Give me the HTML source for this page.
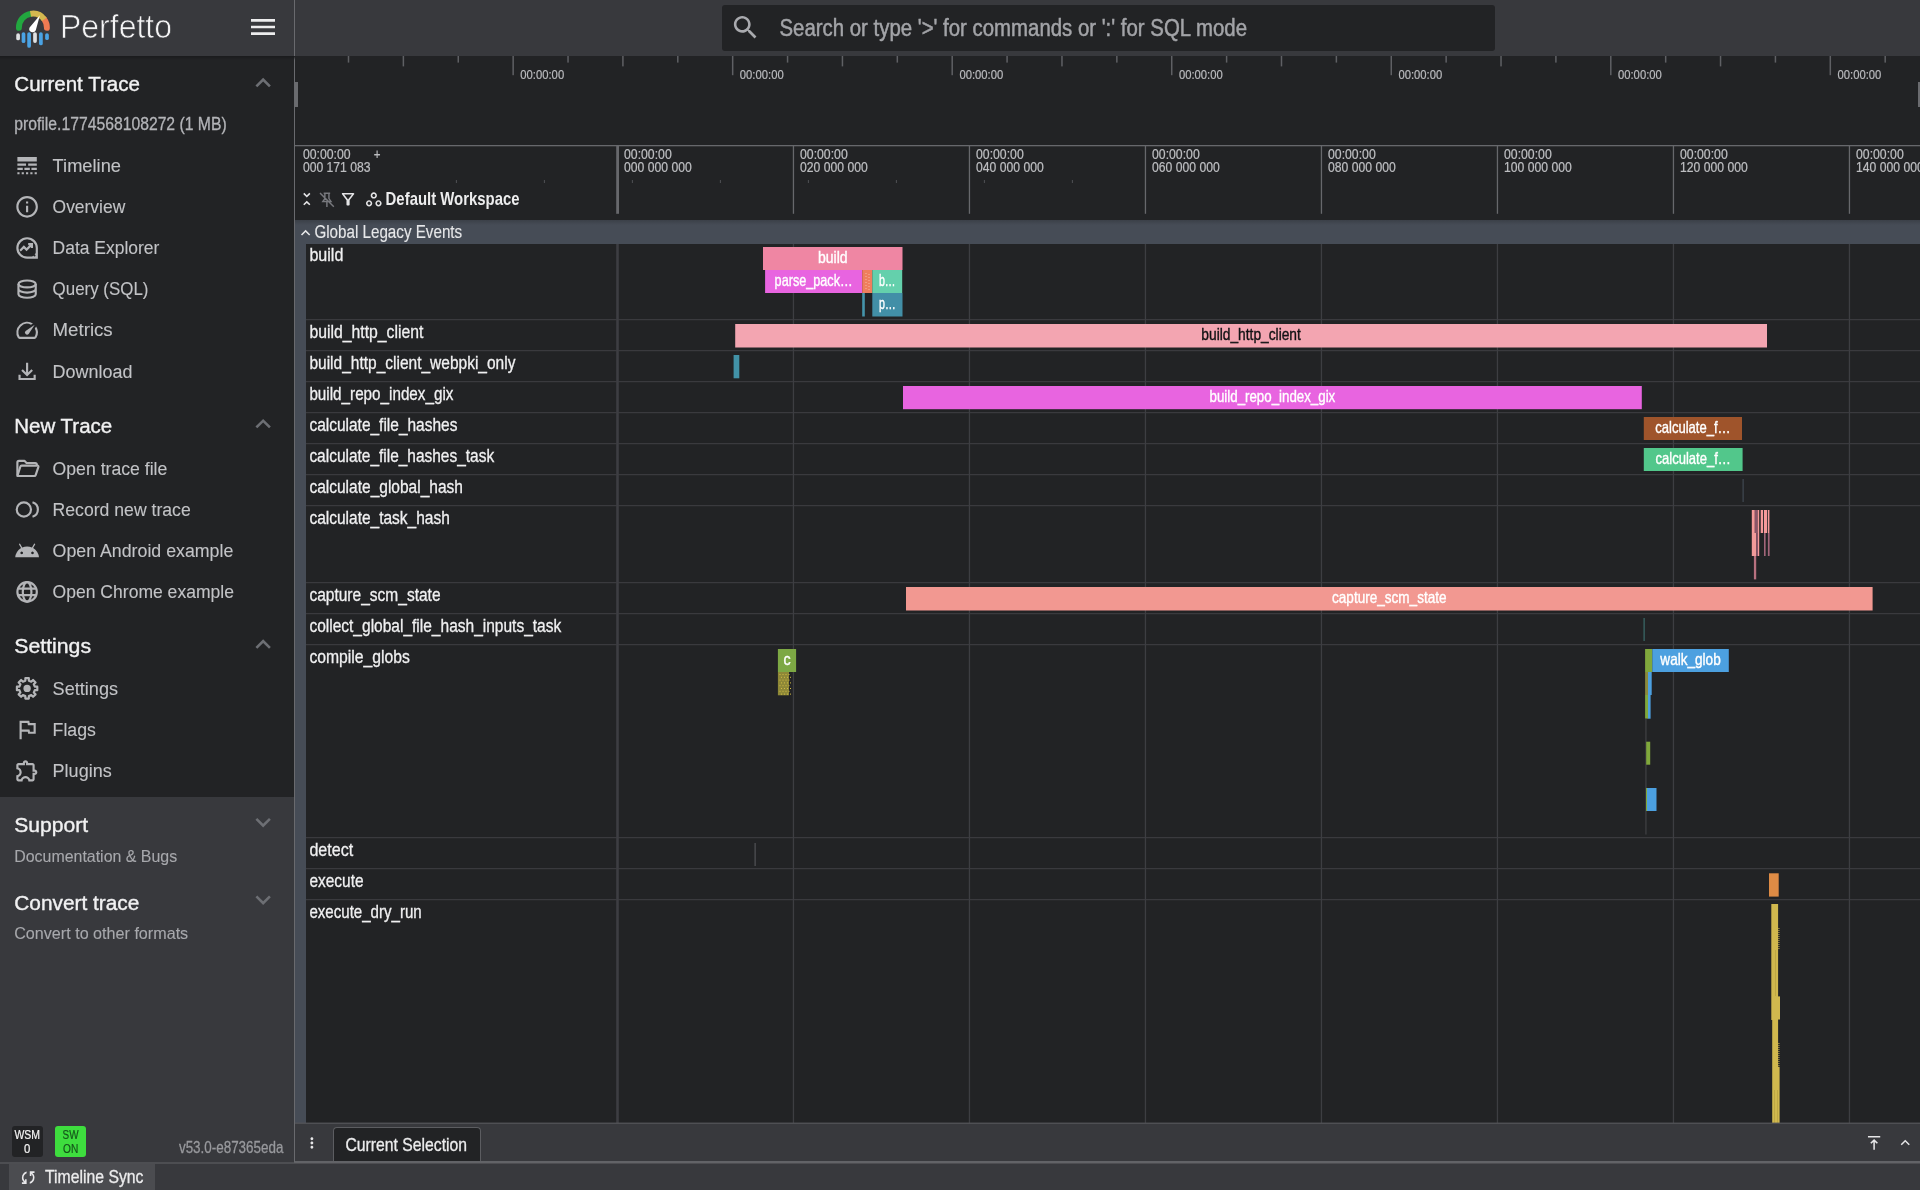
<!DOCTYPE html>
<html lang="en"><head><meta charset="utf-8"><title>Perfetto UI</title>
<style>
html,body{margin:0;padding:0;background:#222325;}
body{width:1920px;height:1190px;position:relative;overflow:hidden;font-family:"Liberation Sans",sans-serif;}
#app div{position:absolute;}
#ov{position:absolute;left:0;top:0;will-change:transform;}
#ov text{font-family:"Liberation Sans",sans-serif;white-space:pre;}
</style></head><body>
<div id="app">
<div style="left:0px;top:0px;width:1920px;height:56px;background:#38393d;"></div>
<div style="left:0px;top:56px;width:294px;height:741px;background:#222325;"></div>
<div style="left:0px;top:797px;width:294px;height:366px;background:#38393d;"></div>
<div style="left:294px;top:0px;width:1px;height:1163px;background:#696a6e;"></div>
<div style="left:722px;top:5px;width:773px;height:46px;background:#222325;border-radius:3px;"></div>
<div style="left:0;top:56px;width:1920px;height:4px;background:linear-gradient(#1a1b1d,rgba(34,35,38,0));"></div>
<div style="left:12px;top:1126px;width:31px;height:31px;background:#222325;border-radius:3px;"></div>
<div style="left:55px;top:1126px;width:31px;height:31px;background:#3edd3e;border-radius:3px;"></div>
<div style="left:295px;top:56px;width:1625px;height:1067px;background:#222325;"></div>
<div style="left:295px;top:82px;width:3px;height:25px;background:#6a6b6f;"></div>
<div style="left:1918px;top:82px;width:2px;height:25px;background:#6a6b6f;"></div>
<div style="left:295px;top:220px;width:1625px;height:24px;background:linear-gradient(#3b4048,#464c56 5px,#464c56);"></div>
<div style="left:295px;top:244px;width:11px;height:879px;background:#464c56;"></div>
<div style="left:295px;top:1123px;width:1625px;height:40px;background:#38393d;"></div>
<div style="left:333px;top:1127px;width:148px;height:36px;background:#222325;border:1px solid #5c5d61;border-bottom:none;border-radius:4px 4px 0 0;box-sizing:border-box;"></div>
<div style="left:0px;top:1163px;width:1920px;height:27px;background:#38393d;"></div>
<div style="left:9px;top:1164px;width:146px;height:26px;background:#4b4c50;"></div>
</div>
<svg id="ov" width="1920" height="1190" viewBox="0 0 1920 1190">
<g>
<path d="M18.900 27.900A14 14 0 0 1 30.500 13.800" stroke="#22a73f" stroke-width="5.900" fill="none" stroke-linecap="round"/>
<path d="M44.300 19.400A14 14 0 0 1 46.900 27.900" stroke="#ef7a52" stroke-width="5.900" fill="none" stroke-linecap="round"/>
<path d="M30.500 13.800A14 14 0 0 1 44.300 19.400" stroke="#d4b84f" stroke-width="5.900" fill="none"/>
<path d="M39.900 15.300L35.800 30.200A3.400 3.400 0 0 1 29.600 27.400Z" fill="#ffffff"/>
<g stroke-linecap="round" stroke-width="3.700">
<path d="M18.100 35v3.400" stroke="#dfe1e3"/><path d="M23.500 34v7.200" stroke="#4aa3e4"/><path d="M29.100 34v12" stroke="#4aa3e4"/>
<path d="M35 34v7.100" stroke="#dfe1e3"/><path d="M40.900 34v9.400" stroke="#4aa3e4"/><path d="M47 35v3.200" stroke="#4aa3e4"/>
</g></g>
<text x="60" y="38.300" font-size="32.5" fill="#f4f4f5" stroke="#38393d" stroke-width="0.700" textLength="112" lengthAdjust="spacingAndGlyphs">Perfetto</text>
<g transform="translate(247.00 11.00) scale(1.3333)" fill="#ededee" ><path d="M3 18h18v-2H3v2zm0-5h18v-2H3v2zm0-7v2h18V6H3z"/></g>
<g transform="translate(730.00 12.00) scale(1.2917)" fill="#a9aaae" ><path d="M15.5 14h-.79l-.28-.27C15.410 12.590 16 11.110 16 9.500 16 5.910 13.090 3 9.500 3S3 5.910 3 9.500 5.910 16 9.500 16c1.610 0 3.090-.59 4.230-1.570l.27.28v.79l5 4.990L20.490 19l-4.990-5zm-6 0C7.010 14 5 11.990 5 9.500S7.010 5 9.500 5 14 7.010 14 9.500 11.990 14 9.500 14z"/></g>
<text x="779.50" y="35.60" font-size="23.50" fill="#a3a4a8" textLength="467.50" lengthAdjust="spacingAndGlyphs"  stroke="#a3a4a8" stroke-width="0.50">Search or type '&gt;' for commands or ':' for SQL mode</text>
<text x="14.30" y="91.40" font-size="20.89" fill="#f1f1f2" textLength="125.65" lengthAdjust="spacingAndGlyphs"  stroke="#f1f1f2" stroke-width="0.38">Current Trace</text>
<g transform="translate(247.80 67.55) scale(1.2792)" fill="#6d6f74" ><path d="M12 8l-6 6 1.41 1.41L12 10.83l4.59 4.58L18 14z"/></g>
<text x="14.20" y="130.00" font-size="18.28" fill="#b3b4b8" textLength="212.50" lengthAdjust="spacingAndGlyphs"  stroke="#b3b4b8" stroke-width="0.31">profile.1774568108272 (1 MB)</text>
<g color="#b4b5b8">
<g transform="translate(14.15 152.75) scale(1.0792)" fill="#b4b5b8" ><path d="M3 16h5v-2H3v2zm6.5 0h5v-2h-5v2zm6.500 0h5v-2h-5v2zM3 20h2v-2H3v2zm4 0h2v-2H7v2zm4 0h2v-2h-2v2zm4 0h2v-2h-2v2zm4 0h2v-2h-2v2zM3 12h8v-2H3v2zm10 0h8v-2h-8v2zM3 4v4h18V4H3z"/></g>
</g>
<text x="52.60" y="171.80" font-size="18.28" fill="#c2c3c6" textLength="68.38" lengthAdjust="spacingAndGlyphs"  stroke="#c2c3c6" stroke-width="0.11">Timeline</text>
<g color="#b4b5b8">
<g transform="translate(14.15 193.89) scale(1.0792)" fill="#b4b5b8" ><path d="M11 7h2v2h-2zm0 4h2v6h-2zm1-9C6.48 2 2 6.48 2 12s4.480 10 10 10 10-4.480 10-10S17.520 2 12 2zm0 18c-4.410 0-8-3.590-8-8s3.590-8 8-8 8 3.590 8 8-3.590 8-8 8z"/></g>
</g>
<text x="52.60" y="212.94" font-size="18.28" fill="#c2c3c6" textLength="72.63" lengthAdjust="spacingAndGlyphs"  stroke="#c2c3c6" stroke-width="0.11">Overview</text>
<g color="#b4b5b8">
<g transform="translate(14.15 235.03) scale(1.0792)" fill="#b4b5b8" ><g fill="none" stroke="currentColor" stroke-width="2"><path d="M21 21V12a9 9 0 1 0-9 9Z" stroke-linejoin="miter"/><path d="M5.500 14.500l3.500-3.500 2.500 2.500 4.500-4.500M13 8.500h3.500V12" stroke-linejoin="miter"/><path d="M20.500 20.500H16a9 9 0 0 0 4.500-4.500Z" fill="currentColor" stroke="none"/></g><circle cx="18.900" cy="18.900" r="0.900" fill="#222325"/></g>
</g>
<text x="52.60" y="254.08" font-size="18.28" fill="#c2c3c6" textLength="106.76" lengthAdjust="spacingAndGlyphs"  stroke="#c2c3c6" stroke-width="0.11">Data Explorer</text>
<g color="#b4b5b8">
<g transform="translate(14.15 276.17) scale(1.0792)" fill="#b4b5b8" ><g fill="none" stroke="currentColor" stroke-width="2"><ellipse cx="12" cy="7.200" rx="8" ry="3.200"/><path d="M4 7.200v9.600c0 1.800 3.600 3.200 8 3.200s8-1.400 8-3.200V7.200M4 12c0 1.800 3.600 3.200 8 3.200s8-1.400 8-3.200"/></g></g>
</g>
<text x="52.60" y="295.22" font-size="18.28" fill="#c2c3c6" textLength="95.86" lengthAdjust="spacingAndGlyphs"  stroke="#c2c3c6" stroke-width="0.11">Query (SQL)</text>
<g color="#b4b5b8">
<g transform="translate(14.15 317.31) scale(1.0792)" fill="#b4b5b8" ><path d="M20.380 8.570l-1.230 1.850a8 8 0 0 1-.22 7.580H5.070A8 8 0 0 1 15.580 6.850l1.850-1.230A10 10 0 0 0 3.350 19a2 2 0 0 0 1.720 1h13.850a2 2 0 0 0 1.740-1 10 10 0 0 0-.27-10.440zm-9.790 6.840a2 2 0 0 0 2.830 0l5.660-8.490-8.490 5.660a2 2 0 0 0 0 2.830z"/></g>
</g>
<text x="52.60" y="336.36" font-size="18.28" fill="#c2c3c6" textLength="60.07" lengthAdjust="spacingAndGlyphs"  stroke="#c2c3c6" stroke-width="0.11">Metrics</text>
<g color="#b4b5b8">
<g transform="translate(14.15 358.45) scale(1.0792)" fill="#b4b5b8" ><g fill="none" stroke="currentColor" stroke-width="2"><path d="M12 4v11M7.300 10.600L12 15.300l4.700-4.700M5 15v4h14v-4"/></g></g>
</g>
<text x="52.60" y="377.50" font-size="18.28" fill="#c2c3c6" textLength="79.77" lengthAdjust="spacingAndGlyphs"  stroke="#c2c3c6" stroke-width="0.11">Download</text>
<text x="14.30" y="432.50" font-size="20.89" fill="#f1f1f2" textLength="97.92" lengthAdjust="spacingAndGlyphs"  stroke="#f1f1f2" stroke-width="0.38">New Trace</text>
<g transform="translate(247.80 408.65) scale(1.2792)" fill="#6d6f74" ><path d="M12 8l-6 6 1.41 1.41L12 10.83l4.59 4.58L18 14z"/></g>
<g color="#b4b5b8">
<g transform="translate(14.15 455.45) scale(1.0792)" fill="#b4b5b8" ><g fill="none" stroke="currentColor" stroke-width="2" stroke-linejoin="round"><path d="M3 18.500V6.500q0-1.500 1.500-1.500h5l2 2h8q1.500 0 1.500 1.500V9"/><path d="M3 19l2.700-8.500q.3-1 1.300-1h14.500q1.300 0 .9 1.300L20 18q-.3 1-1.300 1z"/></g></g>
</g>
<text x="52.60" y="474.50" font-size="18.28" fill="#c2c3c6" textLength="114.69" lengthAdjust="spacingAndGlyphs"  stroke="#c2c3c6" stroke-width="0.11">Open trace file</text>
<g color="#b4b5b8">
<g transform="translate(14.15 496.62) scale(1.0792)" fill="#b4b5b8" ><g fill="none" stroke="currentColor" stroke-width="2"><circle cx="9" cy="12" r="6.600"/><path d="M17 5.300a7 7 0 0 1 0 13.400" stroke-linecap="butt"/></g></g>
</g>
<text x="52.60" y="515.67" font-size="18.28" fill="#c2c3c6" textLength="138.13" lengthAdjust="spacingAndGlyphs"  stroke="#c2c3c6" stroke-width="0.11">Record new trace</text>
<g color="#b4b5b8">
<g transform="translate(14.15 537.79) scale(1.0792)" fill="#b4b5b8" ><path d="M1 18q.225-2.675 1.638-4.925T6.400 9.500L4.550 6.300q-.15-.225-.075-.475T4.800 5.450q.2-.125.450-.050t.4.3L7.500 8.900Q9.650 8 12 8t4.500.9l1.850-3.200q.15-.225.4-.3t.45.050q.25.125.325.375t-.075.475L17.600 9.500q2.350 1.325 3.763 3.575T23 18zm6-2.750q.525 0 .888-.363T8.250 14t-.363-.888T7 12.750t-.888.363T5.750 14t.363.888.887.362m10 0q.525 0 .888-.363T18.250 14t-.363-.888T17 12.750t-.888.363T15.750 14t.363.888.887.362"/></g>
</g>
<text x="52.60" y="556.84" font-size="18.28" fill="#c2c3c6" textLength="180.73" lengthAdjust="spacingAndGlyphs"  stroke="#c2c3c6" stroke-width="0.11">Open Android example</text>
<g color="#b4b5b8">
<g transform="translate(14.15 578.96) scale(1.0792)" fill="#b4b5b8" ><g fill="none" stroke="currentColor" stroke-width="2"><circle cx="12" cy="12" r="9"/><ellipse cx="12" cy="12" rx="4" ry="9"/><path d="M3.600 9h16.800M3.600 15h16.800"/></g></g>
</g>
<text x="52.60" y="598.01" font-size="18.28" fill="#c2c3c6" textLength="181.33" lengthAdjust="spacingAndGlyphs"  stroke="#c2c3c6" stroke-width="0.11">Open Chrome example</text>
<text x="14.30" y="652.90" font-size="20.89" fill="#f1f1f2" textLength="76.73" lengthAdjust="spacingAndGlyphs"  stroke="#f1f1f2" stroke-width="0.38">Settings</text>
<g transform="translate(247.80 629.05) scale(1.2792)" fill="#6d6f74" ><path d="M12 8l-6 6 1.41 1.41L12 10.83l4.59 4.58L18 14z"/></g>
<g color="#b4b5b8">
<g transform="translate(14.15 675.45) scale(1.0792)" fill="#b4b5b8" ><g fill="none" stroke="currentColor" stroke-width="2" stroke-linejoin="round"><path d="M10.38 2.54 L13.62 2.54 L13.63 4.88 L15.88 5.82 L17.54 4.16 L19.84 6.46 L18.18 8.12 L19.12 10.37 L21.46 10.38 L21.46 13.62 L19.12 13.63 L18.18 15.88 L19.84 17.54 L17.54 19.84 L15.88 18.18 L13.63 19.12 L13.62 21.46 L10.38 21.46 L10.37 19.12 L8.12 18.18 L6.46 19.84 L4.16 17.54 L5.82 15.88 L4.88 13.63 L2.54 13.62 L2.54 10.38 L4.88 10.37 L5.82 8.12 L4.16 6.46 L6.46 4.16 L8.12 5.82 L10.37 4.88Z"/></g><circle cx="12" cy="12" r="3.400"/></g>
</g>
<text x="52.60" y="694.50" font-size="18.28" fill="#c2c3c6" textLength="65.43" lengthAdjust="spacingAndGlyphs"  stroke="#c2c3c6" stroke-width="0.11">Settings</text>
<g color="#b4b5b8">
<g transform="translate(14.15 716.55) scale(1.0792)" fill="#b4b5b8" ><path d="M12.360 6l.4 2H18v6h-3.360l-.4-2H7V6h5.360M14 4H5v17h2v-7h5.600l.4 2h7V6h-5.600L14 4z"/></g>
</g>
<text x="52.60" y="735.60" font-size="18.28" fill="#c2c3c6" textLength="43.32" lengthAdjust="spacingAndGlyphs"  stroke="#c2c3c6" stroke-width="0.11">Flags</text>
<g color="#b4b5b8">
<g transform="translate(14.15 757.65) scale(1.0792)" fill="#b4b5b8" ><path d="M10.500 4.500c.28 0 .5.220.5.500v2h6v6h2c.28 0 .5.220.5.500s-.22.500-.5.500h-2v6h-2.120c-.68-1.750-2.390-3-4.380-3s-3.700 1.250-4.380 3H4v-2.120c1.750-.68 3-2.390 3-4.380 0-1.990-1.240-3.700-2.990-4.380L4 7h6V5c0-.28.220-.5.500-.5m0-2C9.120 2.500 8 3.620 8 5H4c-1.100 0-1.990.9-1.990 2v3.800h.29c1.490 0 2.700 1.210 2.700 2.700s-1.210 2.700-2.700 2.700H2V20c0 1.100.9 2 2 2h3.800v-.3c0-1.490 1.210-2.700 2.700-2.700s2.700 1.210 2.700 2.700v.3H17c1.100 0 2-.9 2-2v-4c1.380 0 2.500-1.120 2.500-2.500S20.380 11 19 11V7c0-1.100-.9-2-2-2h-4c0-1.380-1.120-2.500-2.500-2.500z"/></g>
</g>
<text x="52.60" y="776.70" font-size="18.28" fill="#c2c3c6" textLength="59.11" lengthAdjust="spacingAndGlyphs"  stroke="#c2c3c6" stroke-width="0.11">Plugins</text>
<text x="14.30" y="832.00" font-size="20.89" fill="#f1f1f2" textLength="73.87" lengthAdjust="spacingAndGlyphs"  stroke="#f1f1f2" stroke-width="0.38">Support</text>
<g transform="translate(247.80 806.95) scale(1.2792)" fill="#6d6f74" ><path d="M16.59 8.59L12 13.17 7.41 8.59 6 10l6 6 6-6z"/></g>
<text x="14.20" y="861.90" font-size="15.67" fill="#a7a8ac" textLength="163.00" lengthAdjust="spacingAndGlyphs"  stroke="#a7a8ac" stroke-width="0.10">Documentation &amp; Bugs</text>
<text x="14.30" y="909.50" font-size="20.89" fill="#f1f1f2" textLength="125.05" lengthAdjust="spacingAndGlyphs"  stroke="#f1f1f2" stroke-width="0.38">Convert trace</text>
<g transform="translate(247.80 884.45) scale(1.2792)" fill="#6d6f74" ><path d="M16.59 8.59L12 13.17 7.41 8.59 6 10l6 6 6-6z"/></g>
<text x="14.20" y="939.00" font-size="15.67" fill="#a7a8ac" textLength="174.00" lengthAdjust="spacingAndGlyphs"  stroke="#a7a8ac" stroke-width="0.10">Convert to other formats</text>
<text x="14.40" y="1139.20" font-size="13.06" fill="#f4f4f4" textLength="25.60" lengthAdjust="spacingAndGlyphs"  stroke="#f4f4f4" stroke-width="0.22">WSM</text>
<text x="24.04" y="1153.00" font-size="13.06" fill="#f4f4f4" textLength="6.32" lengthAdjust="spacingAndGlyphs"  stroke="#f4f4f4" stroke-width="0.22">0</text>
<text x="62.60" y="1139.20" font-size="13.06" fill="#15531b" textLength="16.00" lengthAdjust="spacingAndGlyphs"  stroke="#15531b" stroke-width="0.22">SW</text>
<text x="63.00" y="1153.00" font-size="13.06" fill="#15531b" textLength="15.20" lengthAdjust="spacingAndGlyphs"  stroke="#15531b" stroke-width="0.22">ON</text>
<text x="178.93" y="1153.00" font-size="15.67" fill="#98999d" textLength="104.47" lengthAdjust="spacingAndGlyphs"  stroke="#98999d" stroke-width="0.27">v53.0-e87365eda</text>
<rect x="347.75" y="56" width="1.5" height="6.6" fill="#5f6064" />
<rect x="402.63" y="56" width="1.5" height="10.4" fill="#5f6064" />
<rect x="457.51" y="56" width="1.5" height="6.6" fill="#5f6064" />
<rect x="512.40" y="56" width="1.5" height="19.2" fill="#5f6064" />
<text x="520.35" y="78.80" font-size="13.06" fill="#b9babd" textLength="43.80" lengthAdjust="spacingAndGlyphs"  stroke="#b9babd" stroke-width="0.22">00:00:00</text>
<rect x="567.28" y="56" width="1.5" height="6.6" fill="#5f6064" />
<rect x="622.16" y="56" width="1.5" height="10.4" fill="#5f6064" />
<rect x="677.04" y="56" width="1.5" height="6.6" fill="#5f6064" />
<rect x="731.92" y="56" width="1.5" height="19.2" fill="#5f6064" />
<text x="739.87" y="78.80" font-size="13.06" fill="#b9babd" textLength="43.80" lengthAdjust="spacingAndGlyphs"  stroke="#b9babd" stroke-width="0.22">00:00:00</text>
<rect x="786.81" y="56" width="1.5" height="6.6" fill="#5f6064" />
<rect x="841.69" y="56" width="1.5" height="10.4" fill="#5f6064" />
<rect x="896.57" y="56" width="1.5" height="6.6" fill="#5f6064" />
<rect x="951.45" y="56" width="1.5" height="19.2" fill="#5f6064" />
<text x="959.40" y="78.80" font-size="13.06" fill="#b9babd" textLength="43.80" lengthAdjust="spacingAndGlyphs"  stroke="#b9babd" stroke-width="0.22">00:00:00</text>
<rect x="1006.33" y="56" width="1.5" height="6.6" fill="#5f6064" />
<rect x="1061.22" y="56" width="1.5" height="10.4" fill="#5f6064" />
<rect x="1116.10" y="56" width="1.5" height="6.6" fill="#5f6064" />
<rect x="1170.98" y="56" width="1.5" height="19.2" fill="#5f6064" />
<text x="1178.93" y="78.80" font-size="13.06" fill="#b9babd" textLength="43.80" lengthAdjust="spacingAndGlyphs"  stroke="#b9babd" stroke-width="0.22">00:00:00</text>
<rect x="1225.86" y="56" width="1.5" height="6.6" fill="#5f6064" />
<rect x="1280.74" y="56" width="1.5" height="10.4" fill="#5f6064" />
<rect x="1335.63" y="56" width="1.5" height="6.6" fill="#5f6064" />
<rect x="1390.51" y="56" width="1.5" height="19.2" fill="#5f6064" />
<text x="1398.46" y="78.80" font-size="13.06" fill="#b9babd" textLength="43.80" lengthAdjust="spacingAndGlyphs"  stroke="#b9babd" stroke-width="0.22">00:00:00</text>
<rect x="1445.39" y="56" width="1.5" height="6.6" fill="#5f6064" />
<rect x="1500.27" y="56" width="1.5" height="10.4" fill="#5f6064" />
<rect x="1555.15" y="56" width="1.5" height="6.6" fill="#5f6064" />
<rect x="1610.04" y="56" width="1.5" height="19.2" fill="#5f6064" />
<text x="1617.99" y="78.80" font-size="13.06" fill="#b9babd" textLength="43.80" lengthAdjust="spacingAndGlyphs"  stroke="#b9babd" stroke-width="0.22">00:00:00</text>
<rect x="1664.92" y="56" width="1.5" height="6.6" fill="#5f6064" />
<rect x="1719.80" y="56" width="1.5" height="10.4" fill="#5f6064" />
<rect x="1774.68" y="56" width="1.5" height="6.6" fill="#5f6064" />
<rect x="1829.56" y="56" width="1.5" height="19.2" fill="#5f6064" />
<text x="1837.51" y="78.80" font-size="13.06" fill="#b9babd" textLength="43.80" lengthAdjust="spacingAndGlyphs"  stroke="#b9babd" stroke-width="0.22">00:00:00</text>
<rect x="1884.45" y="56" width="1.5" height="6.6" fill="#5f6064" />
<rect x="295" y="145" width="1625" height="1.3" fill="#67686c" />
<rect x="616.2" y="145" width="2.8" height="68.8" fill="#67686c" />
<text x="624.00" y="158.80" font-size="13.87" fill="#bdbec1" textLength="47.70" lengthAdjust="spacingAndGlyphs"  stroke="#bdbec1" stroke-width="0.24">00:00:00</text>
<text x="624.00" y="171.80" font-size="13.87" fill="#bdbec1" textLength="67.70" lengthAdjust="spacingAndGlyphs"  stroke="#bdbec1" stroke-width="0.24">000 000 000</text>
<rect x="792.80" y="145" width="1.3" height="68.8" fill="#67686c" />
<text x="800.00" y="158.80" font-size="13.87" fill="#bdbec1" textLength="47.70" lengthAdjust="spacingAndGlyphs"  stroke="#bdbec1" stroke-width="0.24">00:00:00</text>
<text x="800.00" y="171.80" font-size="13.87" fill="#bdbec1" textLength="67.70" lengthAdjust="spacingAndGlyphs"  stroke="#bdbec1" stroke-width="0.24">020 000 000</text>
<rect x="968.80" y="145" width="1.3" height="68.8" fill="#67686c" />
<text x="976.00" y="158.80" font-size="13.87" fill="#bdbec1" textLength="47.70" lengthAdjust="spacingAndGlyphs"  stroke="#bdbec1" stroke-width="0.24">00:00:00</text>
<text x="976.00" y="171.80" font-size="13.87" fill="#bdbec1" textLength="67.70" lengthAdjust="spacingAndGlyphs"  stroke="#bdbec1" stroke-width="0.24">040 000 000</text>
<rect x="1144.80" y="145" width="1.3" height="68.8" fill="#67686c" />
<text x="1152.00" y="158.80" font-size="13.87" fill="#bdbec1" textLength="47.70" lengthAdjust="spacingAndGlyphs"  stroke="#bdbec1" stroke-width="0.24">00:00:00</text>
<text x="1152.00" y="171.80" font-size="13.87" fill="#bdbec1" textLength="67.70" lengthAdjust="spacingAndGlyphs"  stroke="#bdbec1" stroke-width="0.24">060 000 000</text>
<rect x="1320.80" y="145" width="1.3" height="68.8" fill="#67686c" />
<text x="1328.00" y="158.80" font-size="13.87" fill="#bdbec1" textLength="47.70" lengthAdjust="spacingAndGlyphs"  stroke="#bdbec1" stroke-width="0.24">00:00:00</text>
<text x="1328.00" y="171.80" font-size="13.87" fill="#bdbec1" textLength="67.70" lengthAdjust="spacingAndGlyphs"  stroke="#bdbec1" stroke-width="0.24">080 000 000</text>
<rect x="1496.80" y="145" width="1.3" height="68.8" fill="#67686c" />
<text x="1504.00" y="158.80" font-size="13.87" fill="#bdbec1" textLength="47.70" lengthAdjust="spacingAndGlyphs"  stroke="#bdbec1" stroke-width="0.24">00:00:00</text>
<text x="1504.00" y="171.80" font-size="13.87" fill="#bdbec1" textLength="67.70" lengthAdjust="spacingAndGlyphs"  stroke="#bdbec1" stroke-width="0.24">100 000 000</text>
<rect x="1672.80" y="145" width="1.3" height="68.8" fill="#67686c" />
<text x="1680.00" y="158.80" font-size="13.87" fill="#bdbec1" textLength="47.70" lengthAdjust="spacingAndGlyphs"  stroke="#bdbec1" stroke-width="0.24">00:00:00</text>
<text x="1680.00" y="171.80" font-size="13.87" fill="#bdbec1" textLength="67.70" lengthAdjust="spacingAndGlyphs"  stroke="#bdbec1" stroke-width="0.24">120 000 000</text>
<rect x="1848.80" y="145" width="1.3" height="68.8" fill="#67686c" />
<text x="1856.00" y="158.80" font-size="13.87" fill="#bdbec1" textLength="47.70" lengthAdjust="spacingAndGlyphs"  stroke="#bdbec1" stroke-width="0.24">00:00:00</text>
<text x="1856.00" y="171.80" font-size="13.87" fill="#bdbec1" textLength="67.70" lengthAdjust="spacingAndGlyphs"  stroke="#bdbec1" stroke-width="0.24">140 000 000</text>
<text x="302.90" y="158.80" font-size="13.87" fill="#bdbec1" textLength="47.70" lengthAdjust="spacingAndGlyphs"  stroke="#bdbec1" stroke-width="0.24">00:00:00</text>
<text x="302.90" y="171.80" font-size="13.87" fill="#bdbec1" textLength="67.70" lengthAdjust="spacingAndGlyphs"  stroke="#bdbec1" stroke-width="0.24">000 171 083</text>
<text x="373.80" y="158.60" font-size="13.87" fill="#bdbec1" textLength="6.76" lengthAdjust="spacingAndGlyphs"  stroke="#bdbec1" stroke-width="0.24">+</text>
<rect x="455.90" y="180" width="0.9" height="3" fill="#55565a" />
<rect x="543.90" y="180" width="0.9" height="3" fill="#55565a" />
<rect x="631.90" y="180" width="0.9" height="3" fill="#55565a" />
<rect x="719.90" y="180" width="0.9" height="3" fill="#55565a" />
<rect x="807.90" y="180" width="0.9" height="3" fill="#55565a" />
<rect x="895.90" y="180" width="0.9" height="3" fill="#55565a" />
<rect x="983.90" y="180" width="0.9" height="3" fill="#55565a" />
<rect x="1071.90" y="180" width="0.9" height="3" fill="#55565a" />
<g transform="translate(297.40 189.70) scale(0.7833)" fill="#e4e4e6" ><path d="M7.410 18.590L8.830 20 12 16.830 15.170 20l1.410-1.410L12 14l-4.590 4.590zm9.180-13.180L15.170 4 12 7.170 8.830 4 7.410 5.410 12 10l4.590-4.590z"/></g>
<g color="#77787d">
<g transform="translate(317.15 190.05) scale(0.8125)" fill="#7d7e83" ><g fill="none" stroke="currentColor" stroke-width="1.800"><path d="M8 4h8M9.500 4v6.500L7 14h10l-2.500-3.500V4M12 14v7M3.500 3.500l17 17"/></g></g>
</g>
<g transform="translate(338.60 189.80) scale(0.7875)" fill="#e4e4e6" ><path d="M7 6h10l-5.010 6.300L7 6zm-2.750-.39C6.270 8.200 10 13 10 13v6c0 .55.450 1 1 1h2c.550 0 1-.45 1-1v-6s3.720-4.800 5.740-7.390A.998.998 0 0 0 18.950 4H5.040c-.83 0-1.300.95-.79 1.610z"/></g>
<g transform="translate(364.40 190.00) scale(0.7833)" fill="#e4e4e6" ><path d="M6 15c1.100 0 2 .9 2 2s-.9 2-2 2-2-.9-2-2 .9-2 2-2m0-2c-2.200 0-4 1.800-4 4s1.800 4 4 4 4-1.800 4-4-1.800-4-4-4zm6-8c1.100 0 2 .9 2 2s-.9 2-2 2-2-.9-2-2 .9-2 2-2m0-2C9.800 3 8 4.800 8 7s1.800 4 4 4 4-1.800 4-4-1.800-4-4-4zm6 12c1.100 0 2 .9 2 2s-.9 2-2 2-2-.9-2-2 .9-2 2-2m0-2c-2.200 0-4 1.800-4 4s1.800 4 4 4 4-1.800 4-4-1.800-4-4-4z"/></g>
<text x="385.60" y="205.00" font-size="18.28" fill="#ededee" textLength="134.00" lengthAdjust="spacingAndGlyphs" font-weight="700" >Default Workspace</text>
<g transform="translate(296.35 223.65) scale(0.7708)" fill="#e8e8ea" ><path d="M12 8l-6 6 1.41 1.41L12 10.83l4.59 4.58L18 14z"/></g>
<text x="314.40" y="237.50" font-size="18.28" fill="#e6e7e9" textLength="147.78" lengthAdjust="spacingAndGlyphs"  stroke="#e6e7e9" stroke-width="0.13">Global Legacy Events</text>
<text x="309.40" y="261.20" font-size="18.28" fill="#f0f0f1" textLength="33.99" lengthAdjust="spacingAndGlyphs"  stroke="#f0f0f1" stroke-width="0.31">build</text>
<rect x="306" y="319.1" width="1614" height="1.1" fill="#3d3e42" />
<text x="309.40" y="338.20" font-size="18.28" fill="#f0f0f1" textLength="114.02" lengthAdjust="spacingAndGlyphs"  stroke="#f0f0f1" stroke-width="0.31">build_http_client</text>
<rect x="306" y="350.1" width="1614" height="1.1" fill="#3d3e42" />
<text x="309.40" y="369.20" font-size="18.28" fill="#f0f0f1" textLength="206.00" lengthAdjust="spacingAndGlyphs"  stroke="#f0f0f1" stroke-width="0.31">build_http_client_webpki_only</text>
<rect x="306" y="381.1" width="1614" height="1.1" fill="#3d3e42" />
<text x="309.40" y="400.20" font-size="18.28" fill="#f0f0f1" textLength="144.03" lengthAdjust="spacingAndGlyphs"  stroke="#f0f0f1" stroke-width="0.31">build_repo_index_gix</text>
<rect x="306" y="412.1" width="1614" height="1.1" fill="#3d3e42" />
<text x="309.40" y="431.20" font-size="18.28" fill="#f0f0f1" textLength="148.04" lengthAdjust="spacingAndGlyphs"  stroke="#f0f0f1" stroke-width="0.31">calculate_file_hashes</text>
<rect x="306" y="443.1" width="1614" height="1.1" fill="#3d3e42" />
<text x="309.40" y="462.20" font-size="18.28" fill="#f0f0f1" textLength="184.76" lengthAdjust="spacingAndGlyphs"  stroke="#f0f0f1" stroke-width="0.31">calculate_file_hashes_task</text>
<rect x="306" y="474.1" width="1614" height="1.1" fill="#3d3e42" />
<text x="309.40" y="493.20" font-size="18.28" fill="#f0f0f1" textLength="153.55" lengthAdjust="spacingAndGlyphs"  stroke="#f0f0f1" stroke-width="0.31">calculate_global_hash</text>
<rect x="306" y="505.1" width="1614" height="1.1" fill="#3d3e42" />
<text x="309.40" y="524.20" font-size="18.28" fill="#f0f0f1" textLength="140.45" lengthAdjust="spacingAndGlyphs"  stroke="#f0f0f1" stroke-width="0.31">calculate_task_hash</text>
<rect x="306" y="582.1" width="1614" height="1.1" fill="#3d3e42" />
<text x="309.40" y="601.20" font-size="18.28" fill="#f0f0f1" textLength="131.17" lengthAdjust="spacingAndGlyphs"  stroke="#f0f0f1" stroke-width="0.31">capture_scm_state</text>
<rect x="306" y="613.1" width="1614" height="1.1" fill="#3d3e42" />
<text x="309.40" y="632.20" font-size="18.28" fill="#f0f0f1" textLength="251.87" lengthAdjust="spacingAndGlyphs"  stroke="#f0f0f1" stroke-width="0.31">collect_global_file_hash_inputs_task</text>
<rect x="306" y="644.1" width="1614" height="1.1" fill="#3d3e42" />
<text x="309.40" y="663.20" font-size="18.28" fill="#f0f0f1" textLength="100.59" lengthAdjust="spacingAndGlyphs"  stroke="#f0f0f1" stroke-width="0.31">compile_globs</text>
<rect x="306" y="837.1" width="1614" height="1.1" fill="#3d3e42" />
<text x="309.40" y="856.20" font-size="18.28" fill="#f0f0f1" textLength="43.77" lengthAdjust="spacingAndGlyphs"  stroke="#f0f0f1" stroke-width="0.31">detect</text>
<rect x="306" y="868.1" width="1614" height="1.1" fill="#3d3e42" />
<text x="309.40" y="887.20" font-size="18.28" fill="#f0f0f1" textLength="54.14" lengthAdjust="spacingAndGlyphs"  stroke="#f0f0f1" stroke-width="0.31">execute</text>
<rect x="306" y="899.1" width="1614" height="1.1" fill="#3d3e42" />
<text x="309.40" y="918.20" font-size="18.28" fill="#f0f0f1" textLength="112.36" lengthAdjust="spacingAndGlyphs"  stroke="#f0f0f1" stroke-width="0.31">execute_dry_run</text>
<rect x="616.2" y="244" width="2.6" height="879" fill="#3d3e42" />
<rect x="792.80" y="244" width="1.3" height="879" fill="#3d3e42" />
<rect x="968.80" y="244" width="1.3" height="879" fill="#3d3e42" />
<rect x="1144.80" y="244" width="1.3" height="879" fill="#3d3e42" />
<rect x="1320.80" y="244" width="1.3" height="879" fill="#3d3e42" />
<rect x="1496.80" y="244" width="1.3" height="879" fill="#3d3e42" />
<rect x="1672.80" y="244" width="1.3" height="879" fill="#3d3e42" />
<rect x="1848.80" y="244" width="1.3" height="879" fill="#3d3e42" />
<rect x="763.0" y="247" width="139.5" height="23" fill="#ef86a3" />
<text x="817.91" y="263.20" font-size="15.67" fill="#ffffff" textLength="29.67" lengthAdjust="spacingAndGlyphs"  stroke="#ffffff" stroke-width="0.38">build</text>
<rect x="765.1" y="270" width="97.1" height="23" fill="#e864e0" />
<text x="774.62" y="286.20" font-size="15.67" fill="#ffffff" textLength="78.05" lengthAdjust="spacingAndGlyphs"  stroke="#ffffff" stroke-width="0.38">parse_pack…</text>
<rect x="862.2" y="270" width="10.1" height="23" fill="#ef7e5d" />
<rect x="872.3" y="270" width="29.9" height="23" fill="#64d0ac" />
<text x="878.93" y="286.20" font-size="15.67" fill="#ffffff" textLength="16.64" lengthAdjust="spacingAndGlyphs"  stroke="#ffffff" stroke-width="0.38">b…</text>
<rect x="862.2" y="293" width="2.6" height="23.5" fill="#4594ab" />
<rect x="872.3" y="293" width="30.2" height="23.5" fill="#428fa7" />
<text x="879.08" y="309.20" font-size="15.67" fill="#ffffff" textLength="16.64" lengthAdjust="spacingAndGlyphs"  stroke="#ffffff" stroke-width="0.38">p…</text>
<rect x="865.5" y="273" width="1" height="1" fill="#f6b9a6" />
<rect x="868.5" y="274" width="1" height="1" fill="#f6b9a6" />
<rect x="865.5" y="276" width="1" height="1" fill="#f6b9a6" />
<rect x="868.5" y="277" width="1" height="1" fill="#f6b9a6" />
<rect x="865.5" y="279" width="1" height="1" fill="#f6b9a6" />
<rect x="868.5" y="280" width="1" height="1" fill="#f6b9a6" />
<rect x="865.5" y="282" width="1" height="1" fill="#f6b9a6" />
<rect x="868.5" y="283" width="1" height="1" fill="#f6b9a6" />
<rect x="865.5" y="285" width="1" height="1" fill="#f6b9a6" />
<rect x="868.5" y="286" width="1" height="1" fill="#f6b9a6" />
<rect x="865.5" y="288" width="1" height="1" fill="#f6b9a6" />
<rect x="868.5" y="289" width="1" height="1" fill="#f6b9a6" />
<rect x="735.2" y="324" width="1031.8" height="23.5" fill="#f3a5b1" />
<text x="1201.34" y="340.20" font-size="15.67" fill="#111214" textLength="99.52" lengthAdjust="spacingAndGlyphs"  stroke="#111214" stroke-width="0.38">build_http_client</text>
<rect x="733.6" y="355" width="5.7" height="23.3" fill="#4292a7" />
<rect x="903.0" y="386" width="738.8" height="23.2" fill="#e864e0" />
<text x="1209.54" y="402.20" font-size="15.67" fill="#ffffff" textLength="125.72" lengthAdjust="spacingAndGlyphs"  stroke="#ffffff" stroke-width="0.38">build_repo_index_gix</text>
<rect x="1643.8" y="417" width="98.2" height="23" fill="#9f542b" />
<text x="1655.26" y="433.20" font-size="15.67" fill="#ffffff" textLength="75.27" lengthAdjust="spacingAndGlyphs"  stroke="#ffffff" stroke-width="0.38">calculate_f…</text>
<rect x="1643.8" y="448" width="98.8" height="23" fill="#52c78b" />
<text x="1655.56" y="464.20" font-size="15.67" fill="#ffffff" textLength="75.27" lengthAdjust="spacingAndGlyphs"  stroke="#ffffff" stroke-width="0.38">calculate_f…</text>
<rect x="1742.6" y="479" width="1" height="23" fill="#46505b" />
<rect x="1751.8" y="510" width="3.0" height="23" fill="#f4999a" />
<rect x="1754.8" y="510" width="2.9" height="23" fill="#8a5468" />
<rect x="1757.7" y="510" width="1.5" height="23" fill="#f4999a" />
<rect x="1760.7" y="510" width="2.4" height="23" fill="#f4999a" />
<rect x="1764.0" y="510" width="3.1" height="23" fill="#f4999a" />
<rect x="1767.9" y="510" width="1.5" height="23" fill="#f4999a" />
<rect x="1751.8" y="533" width="4.4" height="23" fill="#f19a9a" />
<rect x="1756.2" y="533" width="1.8" height="23" fill="#8a5468" />
<rect x="1758.0" y="533" width="1.2" height="23" fill="#f4999a" />
<rect x="1764.0" y="533" width="1.6" height="23" fill="#a2667a" />
<rect x="1767.9" y="533" width="1.7" height="23" fill="#a2667a" />
<rect x="1753.9" y="556" width="2.3" height="23.4" fill="#b7717f" />
<rect x="906.0" y="587" width="966.6" height="23.5" fill="#f29891" />
<text x="1332.06" y="603.20" font-size="15.67" fill="#ffffff" textLength="114.49" lengthAdjust="spacingAndGlyphs"  stroke="#ffffff" stroke-width="0.38">capture_scm_state</text>
<rect x="1643.6" y="618" width="1" height="23" fill="#3f7a78" />
<rect x="777.9" y="649" width="18.2" height="23" fill="#7da844" />
<text x="783.45" y="665.20" font-size="15.67" fill="#ffffff" textLength="7.10" lengthAdjust="spacingAndGlyphs"  stroke="#ffffff" stroke-width="0.38">c</text>
<rect x="777.9" y="672" width="11.1" height="23.3" fill="#8e8837" />
<rect x="779.5" y="674.0" width="1" height="1" fill="#d2bb45" />
<rect x="782.5" y="674.0" width="1" height="1" fill="#d2bb45" />
<rect x="785.5" y="674.0" width="1" height="1" fill="#d2bb45" />
<rect x="788.5" y="674.0" width="1" height="1" fill="#d2bb45" />
<rect x="781.0" y="676.8" width="1" height="1" fill="#d2bb45" />
<rect x="784.0" y="676.8" width="1" height="1" fill="#d2bb45" />
<rect x="787.0" y="676.8" width="1" height="1" fill="#d2bb45" />
<rect x="790.0" y="676.8" width="1" height="1" fill="#d2bb45" />
<rect x="779.5" y="679.6" width="1" height="1" fill="#d2bb45" />
<rect x="782.5" y="679.6" width="1" height="1" fill="#d2bb45" />
<rect x="785.5" y="679.6" width="1" height="1" fill="#d2bb45" />
<rect x="788.5" y="679.6" width="1" height="1" fill="#d2bb45" />
<rect x="781.0" y="682.4" width="1" height="1" fill="#d2bb45" />
<rect x="784.0" y="682.4" width="1" height="1" fill="#d2bb45" />
<rect x="787.0" y="682.4" width="1" height="1" fill="#d2bb45" />
<rect x="790.0" y="682.4" width="1" height="1" fill="#d2bb45" />
<rect x="779.5" y="685.2" width="1" height="1" fill="#d2bb45" />
<rect x="782.5" y="685.2" width="1" height="1" fill="#d2bb45" />
<rect x="785.5" y="685.2" width="1" height="1" fill="#d2bb45" />
<rect x="788.5" y="685.2" width="1" height="1" fill="#d2bb45" />
<rect x="781.0" y="688.0" width="1" height="1" fill="#d2bb45" />
<rect x="784.0" y="688.0" width="1" height="1" fill="#d2bb45" />
<rect x="787.0" y="688.0" width="1" height="1" fill="#d2bb45" />
<rect x="790.0" y="688.0" width="1" height="1" fill="#d2bb45" />
<rect x="779.5" y="690.8" width="1" height="1" fill="#d2bb45" />
<rect x="782.5" y="690.8" width="1" height="1" fill="#d2bb45" />
<rect x="785.5" y="690.8" width="1" height="1" fill="#d2bb45" />
<rect x="788.5" y="690.8" width="1" height="1" fill="#d2bb45" />
<rect x="781.0" y="693.6" width="1" height="1" fill="#d2bb45" />
<rect x="784.0" y="693.6" width="1" height="1" fill="#d2bb45" />
<rect x="787.0" y="693.6" width="1" height="1" fill="#d2bb45" />
<rect x="790.0" y="693.6" width="1" height="1" fill="#d2bb45" />
<rect x="1645.1" y="649" width="7.2" height="23" fill="#80a83c" />
<rect x="1652.3" y="649" width="76.5" height="23" fill="#4ca0e0" />
<text x="1660.35" y="665.20" font-size="15.67" fill="#ffffff" textLength="60.39" lengthAdjust="spacingAndGlyphs"  stroke="#ffffff" stroke-width="0.38">walk_glob</text>
<rect x="1645.1" y="672" width="2.9" height="23" fill="#8a8a3c" />
<rect x="1648.0" y="672" width="3.7" height="23" fill="#4ca0e0" />
<rect x="1645.1" y="695" width="2.9" height="23.7" fill="#80a83c" />
<rect x="1648.0" y="695" width="2.6" height="23.7" fill="#4ca0e0" />
<rect x="1645.5" y="718" width="0.9" height="116.5" fill="#4a4b4f" />
<rect x="1646.2" y="741.7" width="4.0" height="23" fill="#80a83c" />
<rect x="1646.4" y="788" width="10.1" height="23" fill="#4ca0e0" />
<rect x="1646" y="788" width="1" height="23" fill="#80a83c" />
<rect x="754.6" y="843" width="1" height="23" fill="#5b5c60" />
<rect x="1769.0" y="873.3" width="9.7" height="23.3" fill="#de8b45" />
<rect x="1771.3" y="904" width="6.8" height="116" fill="#d0b84e" />
<rect x="1772.2" y="1019.5" width="5.9" height="103.5" fill="#d0b84e" />
<rect x="1774.0" y="996.4" width="6.0" height="23.1" fill="#d0b84e" />
<rect x="1774.0" y="1066.8" width="5.6" height="56.2" fill="#d0b84e" />
<rect x="1778.4" y="928" width="1" height="1" fill="#d0b84e" />
<rect x="1778.4" y="930" width="1" height="1" fill="#d0b84e" />
<rect x="1778.4" y="932" width="1" height="1" fill="#d0b84e" />
<rect x="1778.4" y="934" width="1" height="1" fill="#d0b84e" />
<rect x="1778.4" y="936" width="1" height="1" fill="#d0b84e" />
<rect x="1778.4" y="938" width="1" height="1" fill="#d0b84e" />
<rect x="1778.4" y="940" width="1" height="1" fill="#d0b84e" />
<rect x="1778.4" y="942" width="1" height="1" fill="#d0b84e" />
<rect x="1778.4" y="944" width="1" height="1" fill="#d0b84e" />
<rect x="1778.4" y="946" width="1" height="1" fill="#d0b84e" />
<rect x="1778.4" y="948" width="1" height="1" fill="#d0b84e" />
<rect x="1778.4" y="1043" width="1" height="1" fill="#d0b84e" />
<rect x="1778.4" y="1045" width="1" height="1" fill="#d0b84e" />
<rect x="1778.4" y="1047" width="1" height="1" fill="#d0b84e" />
<rect x="1778.4" y="1049" width="1" height="1" fill="#d0b84e" />
<rect x="1778.4" y="1051" width="1" height="1" fill="#d0b84e" />
<rect x="1778.4" y="1053" width="1" height="1" fill="#d0b84e" />
<rect x="1778.4" y="1055" width="1" height="1" fill="#d0b84e" />
<rect x="1778.4" y="1057" width="1" height="1" fill="#d0b84e" />
<rect x="1778.4" y="1059" width="1" height="1" fill="#d0b84e" />
<rect x="1778.4" y="1061" width="1" height="1" fill="#d0b84e" />
<rect x="1778.4" y="1063" width="1" height="1" fill="#d0b84e" />
<rect x="1778.4" y="1065" width="1" height="1" fill="#d0b84e" />
<rect x="1775.3" y="950" width="0.7" height="46" fill="#b7a040" />
<rect x="1774.2" y="1090" width="0.7" height="33" fill="#b7a040" />
<rect x="1777" y="1090" width="0.7" height="33" fill="#b7a040" />
<rect x="295" y="1122.6" width="1625" height="1.2" fill="#55565a" />
<text x="345.40" y="1151.00" font-size="18.28" fill="#ececed" textLength="121.64" lengthAdjust="spacingAndGlyphs"  stroke="#ececed" stroke-width="0.31">Current Selection</text>
<g transform="translate(303.40 1134.50) scale(0.7083)" fill="#e6e6e8" ><path d="M12 8c1.100 0 2-.9 2-2s-.9-2-2-2-2 .9-2 2 .9 2 2 2zm0 2c-1.100 0-2 .9-2 2s.9 2 2 2 2-.9 2-2-.9-2-2-2zm0 6c-1.100 0-2 .9-2 2s.9 2 2 2 2-.9 2-2-.9-2-2-2z"/></g>
<g transform="translate(1864.90 1133.60) scale(0.7667)" fill="#e6e6e8" ><path d="M4 5V3h16v2H4Zm7 16V10.800l-2.600 2.600L7 12l5-5 5 5-1.400 1.400-2.600-2.600V21h-2Z"/></g>
<g transform="translate(1896.15 1133.60) scale(0.7583)" fill="#e6e6e8" ><path d="M12 8l-6 6 1.41 1.41L12 10.83l4.59 4.58L18 14z"/></g>
<rect x="0" y="1162.4" width="295" height="1.2" fill="#5c5d61" />
<rect x="295" y="1161" width="1625" height="2.5" fill="#626367" />
<g color="#e8e8ea">
<g transform="translate(18.75 1168.15) scale(0.7875)" fill="#e8e8ea" ><path d="M4 20v-2h2.750l-.4-.350q-1.300-1.150-1.825-2.625T4 12.050q0-2.775 1.663-4.938T10 4.250v2.100Q8.200 7 7.100 8.563T6 12.050q0 1.125.425 2.188T7.750 16.200l.25.250V14h2v6zm10-.250v-2.100q1.800-.65 2.900-2.212T18 11.950q0-1.125-.425-2.187T16.250 7.800L16 7.550V10h-2V4h6v2h-2.750l.4.350q1.225 1.225 1.788 2.663T20 11.950q0 2.775-1.662 4.938T14 19.750"/></g>
</g>
<text x="45.00" y="1183.10" font-size="18.28" fill="#ececed" textLength="98.46" lengthAdjust="spacingAndGlyphs"  stroke="#ececed" stroke-width="0.31">Timeline Sync</text>
</svg>
</body></html>
